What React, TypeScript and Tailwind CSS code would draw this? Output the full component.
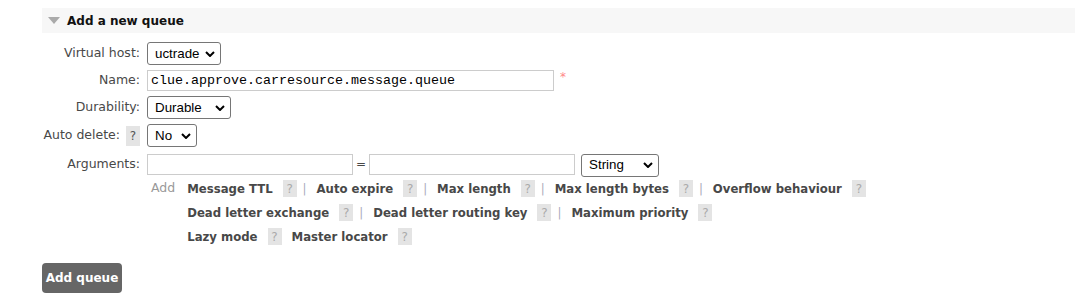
import React from 'react';

const font = { fontFamily: '"DejaVu Sans", Verdana, sans-serif' };

function Chevron() {
  return (
    <svg className="pointer-events-none absolute right-[6px] top-1/2 -translate-y-1/2" width="10" height="6" viewBox="0 0 10 6">
      <path d="M1 1l4 4 4-4" fill="none" stroke="#000" strokeWidth="2" />
    </svg>
  );
}

function Select({ value, options, w }: { value: string; options: string[]; w: string }) {
  return (
    <div className={`relative inline-flex ${w}`}>
      <select
        defaultValue={value}
        className="h-[23px] w-full appearance-none rounded-[3px] border border-[#767676] bg-white pl-[7px] pr-[18px] text-[13.33px] text-black font-['Liberation_Sans',Arial,sans-serif]"
      >
        {options.map((o) => (
          <option key={o}>{o}</option>
        ))}
      </select>
      <Chevron />
    </div>
  );
}

function Help({ tall }: { tall?: boolean }) {
  return (
    <span
      className={`inline-flex w-[14px] items-center justify-center bg-[#e4e4e4] text-[12px] font-normal ${
        tall ? 'h-[20px] text-[#555]' : 'h-[17px] text-[#aaa]'
      }`}
    >
      ?
    </span>
  );
}

function Row({ label, help, children }: { label: string; help?: boolean; children: React.ReactNode }) {
  return (
    <div className="flex items-center">
      <div className="flex w-[98px] items-center justify-end gap-[6px] text-[12.5px] text-[#484848]">
        <span>{label}</span>
        {help && <Help tall />}
      </div>
      <div className="ml-[7px] flex items-center">{children}</div>
    </div>
  );
}

function LinkLine({ items, pipes = true }: { items: string[]; pipes?: boolean }) {
  return (
    <div className="flex h-[16px] items-center text-[11.7px] font-bold text-[#484848]">
      {items.map((it, i) => (
        <React.Fragment key={it}>
          <span>{it}</span>
          <span className="ml-[10px]">
            <Help />
          </span>
          {i < items.length - 1 &&
            (pipes ? (
              <span className="ml-[6px] mr-[10px] font-normal text-[#aab]">|</span>
            ) : (
              <span className="w-[10px]" />
            ))}
        </React.Fragment>
      ))}
    </div>
  );
}

export default function App() {
  return (
    <div className="h-[306px] w-[1075px] bg-white pt-[8px] pl-[42px]" style={font}>
      <div className="flex h-[25px] items-center bg-[#f7f7f7]">
        <svg className="ml-[6px]" width="12" height="7" viewBox="0 0 12 7">
          <path d="M0 0h12L6 7z" fill="#aaa" />
        </svg>
        <span className="ml-[7px] text-[12px] font-bold text-[#111]">Add a new queue</span>
      </div>

      <div className="mt-[9px] flex flex-col gap-[5px]">
        <Row label="Virtual host:">
          <Select value="uctrade" options={['uctrade', '/']} w="w-[74px]" />
        </Row>
        <Row label="Name:">
          <input
            defaultValue="clue.approve.carresource.message.queue"
            className="h-[21px] w-[407px] border border-[#ccc] bg-white px-[3px] text-[13.33px] text-black font-['Liberation_Mono','Courier_New',monospace]"
          />
          <span className="ml-[6px] self-start text-[12px] leading-[14px] text-[#f88]">*</span>
        </Row>
        <Row label="Durability:">
          <Select value="Durable" options={['Durable', 'Transient']} w="w-[84px]" />
        </Row>
        <Row label="Auto delete:" help>
          <Select value="No" options={['No', 'Yes']} w="w-[50px]" />
        </Row>
        <Row label="Arguments:">
          <input className="h-[21px] w-[206px] border border-[#ccc] bg-white" />
          <span className="mx-[3px] text-[12px] text-[#484848]">=</span>
          <input className="h-[21px] w-[206px] border border-[#ccc] bg-white" />
          <span className="ml-[6px]">
            <Select value="String" options={['String', 'Number', 'Boolean', 'List']} w="w-[78px]" />
          </span>
        </Row>
      </div>

      <div className="mt-[5px] flex">
        <span className="ml-[109px] mt-[-1px] text-[12.5px] leading-[14px] text-[#999]">Add</span>
        <div className="ml-[12px] flex flex-col gap-[8px]">
          <LinkLine items={['Message TTL', 'Auto expire', 'Max length', 'Max length bytes', 'Overflow behaviour']} />
          <LinkLine items={['Dead letter exchange', 'Dead letter routing key', 'Maximum priority']} />
          <LinkLine items={['Lazy mode', 'Master locator']} pipes={false} />
        </div>
      </div>

      <button className="mt-[17px] h-[30px] w-[80px] rounded-[4px] bg-[#666] text-[12px] font-bold text-white">
        Add queue
      </button>
    </div>
  );
}
